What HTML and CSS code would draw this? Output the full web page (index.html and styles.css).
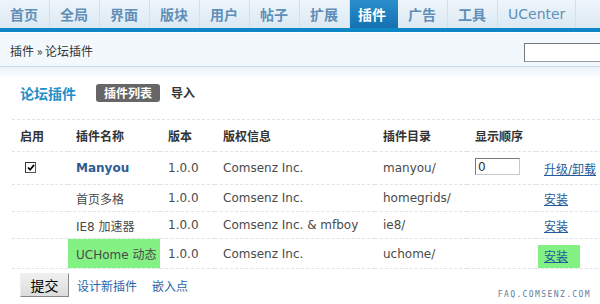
FILE: index.html
```html
<!DOCTYPE html>
<html lang="zh-CN">
<head>
    <meta charset="UTF-8">
    <title>插件 - 论坛插件</title>
    <link rel="stylesheet" href="styles.css">
</head>
<body>
    <!-- 顶部导航 -->
    <div class="nav">
        <a class="nav-item">首页</a>
        <a class="nav-item">全局</a>
        <a class="nav-item">界面</a>
        <a class="nav-item">版块</a>
        <a class="nav-item">用户</a>
        <a class="nav-item">帖子</a>
        <a class="nav-item">扩展</a>
        <a class="nav-item active">插件</a>
        <a class="nav-item">广告</a>
        <a class="nav-item">工具</a>
        <a class="nav-item uc">UCenter</a>
    </div>

    <!-- 面包屑 -->
    <div class="crumb">
        <span>插件 &raquo; 论坛插件</span>
        <input type="text" class="search">
    </div>

    <div class="main">
        <div class="title-bar">
            <h3>论坛插件</h3>
            <span class="tab current">插件列表</span>
            <span class="tab">导入</span>
        </div>

        <table class="list">
            <colgroup>
                <col style="width:56px">
                <col style="width:92px">
                <col style="width:55px">
                <col style="width:160px">
                <col style="width:92px">
                <col style="width:69px">
                <col>
            </colgroup>
            <tr class="head">
                <th>启用</th>
                <th>插件名称</th>
                <th>版本</th>
                <th>版权信息</th>
                <th>插件目录</th>
                <th>显示顺序</th>
                <th></th>
            </tr>
            <tr class="first">
                <td><span class="check"><svg width="9" height="8" viewBox="0 0 9 8"><path d="M1 4 L3.5 6.5 L8 1" fill="none" stroke="#000" stroke-width="2"/></svg></span></td>
                <td><b class="name">Manyou</b></td>
                <td>1.0.0</td>
                <td>Comsenz Inc.</td>
                <td>manyou/</td>
                <td><input type="text" class="order" value="0"></td>
                <td><a class="link">升级/卸载</a></td>
            </tr>
            <tr>
                <td></td>
                <td>首页多格</td>
                <td>1.0.0</td>
                <td>Comsenz Inc.</td>
                <td>homegrids/</td>
                <td></td>
                <td><a class="link">安装</a></td>
            </tr>
            <tr>
                <td></td>
                <td>IE8 加速器</td>
                <td>1.0.0</td>
                <td>Comsenz Inc. &amp; mfboy</td>
                <td>ie8/</td>
                <td></td>
                <td><a class="link">安装</a></td>
            </tr>
            <tr>
                <td></td>
                <td class="mark">UCHome 动态</td>
                <td>1.0.0</td>
                <td>Comsenz Inc.</td>
                <td>uchome/</td>
                <td></td>
                <td><a class="link mark-link">安装</a></td>
            </tr>
        </table>

        <div class="foot">
            <button class="btn">提交</button>
            <a class="foot-link">设计新插件</a>
            <a class="foot-link">嵌入点</a>
        </div>
    </div>

    <div class="watermark">FAQ.COMSENZ.COM</div>
</body>
</html>
```

FILE: styles.css
```css
html, body {
    overflow: hidden;
}

body {
    margin: 0;
    font-family: "DejaVu Sans", "Noto Sans CJK SC", sans-serif;
    font-size: 12px;
    color: #4a4a4a;
    background: #fff;
    position: relative;
    height: 304px;
}

/* 顶部导航 */
.nav {
    display: flex;
    height: 28px;
    background: linear-gradient(#eef5fa, #dce9f3);
    border-bottom: 4px solid #0d87c6;
}

.nav-item {
    display: flex;
    align-items: center;
    padding: 0 11px 0 10px;
    border-right: 1px solid #d0e0ec;
    font-family: "Noto Sans CJK SC", sans-serif;
    font-size: 14px;
    font-weight: bold;
    color: #5f8fb9;
    line-height: 28px;
}

.nav-item.uc {
    font-family: "DejaVu Sans", sans-serif;
    font-weight: normal;
    font-size: 14px;
    padding-right: 10px;
}

.nav-item.active {
    background: linear-gradient(#2a8ecd, #1571b0);
    color: #fff;
    padding: 0 11px 0 8px;
    border-right-color: transparent;
}

/* 面包屑 */
.crumb {
    height: 31px;
    padding: 2px 0 0 10px;
    display: flex;
    align-items: center;
    justify-content: space-between;
    background: #f2f8fc;
    border-top: 1px solid #fff;
    border-bottom: 1px solid #c3d9ea;
    color: #333;
    font-family: "Noto Sans CJK SC", sans-serif;
}

.search {
    width: 90px;
    height: 15px;
    margin-right: -20px;
    margin-top: 3px;
    border: 1px solid #999;
    border-top-color: #777;
    border-left-color: #777;
}

.main {
    padding: 0 0 0 12px;
    background: linear-gradient(#eaf2f8, #fff 12px);
}

.title-bar {
    display: flex;
    align-items: center;
    height: 51px;
    padding: 0 0 1px 8px;
    border-bottom: 1px dashed #dbe5ec;
}

.title-bar h3 {
    margin: 0 20px 0 0;
    font-family: "Noto Sans CJK SC", sans-serif;
    font-size: 14px;
    color: #2290c9;
    line-height: 20px;
}

.tab {
    font-family: "Noto Sans CJK SC", sans-serif;
    font-weight: bold;
    color: #333;
    line-height: 18px;
    padding: 0 6px;
}

.tab.current {
    background: #666;
    color: #fff;
    border-radius: 3px;
    margin-right: 5px;
    padding: 0 8px 0 8px;
}

/* 插件列表 */
.list {
    border-collapse: collapse;
    table-layout: fixed;
    width: 600px;
}

.list th, .list td {
    padding: 0 0 0 8px;
    text-align: left;
    border-bottom: 1px dashed #dbe5ec;
    white-space: nowrap;
    overflow: hidden;
}

.list th {
    height: 31px;
    font-family: "Noto Sans CJK SC", sans-serif;
    color: #333;
}

.list td {
    height: 26px;
}

.list tr.first td {
    height: 32px;
}

.check {
    display: inline-flex;
    align-items: center;
    justify-content: center;
    width: 9px;
    height: 9px;
    margin: 0 0 4px 5px;
    border: 1px solid #555;
    border-top-color: #333;
    border-left-color: #333;
    background: #fff;
}

.check svg {
    width: 8px;
    height: 7px;
}

.name {
    color: #2d5c93;
}

.order {
    width: 39px;
    height: 13px;
    padding: 1px 2px;
    margin: 0 0 3px 0;
    border: 1px solid #c8c8c8;
    border-top-color: #7a7a7a;
    border-left-color: #7a7a7a;
    font-family: "DejaVu Sans", sans-serif;
    font-size: 12px;
    color: #333;
}

.link {
    color: #1f5b9a;
    text-decoration: underline;
}

td.mark {
    background: #84f184;
}

.mark-link {
    display: inline-block;
    background: #84f184;
    padding: 2px 12px 4px 6px;
    margin: 6px 0 0 -6px;
}

.foot {
    display: flex;
    align-items: center;
    padding: 4px 0 0 8px;
}

.btn {
    width: 49px;
    height: 24px;
    padding: 0;
    margin-right: 8px;
    background: linear-gradient(#f0f0f0, #dcdcdc);
    border: 1px solid #888;
    border-top-color: #eee;
    border-left-color: #eee;
    font-family: "Noto Sans CJK SC", sans-serif;
    font-size: 14px;
    color: #000;
}

.foot-link {
    color: #2a63a8;
    margin-right: 15px;
}

.watermark {
    position: absolute;
    right: 9px;
    bottom: 5px;
    font-family: "DejaVu Sans Mono", monospace;
    font-size: 8px;
    letter-spacing: 1.4px;
    color: #5b7c9c;
}
```
